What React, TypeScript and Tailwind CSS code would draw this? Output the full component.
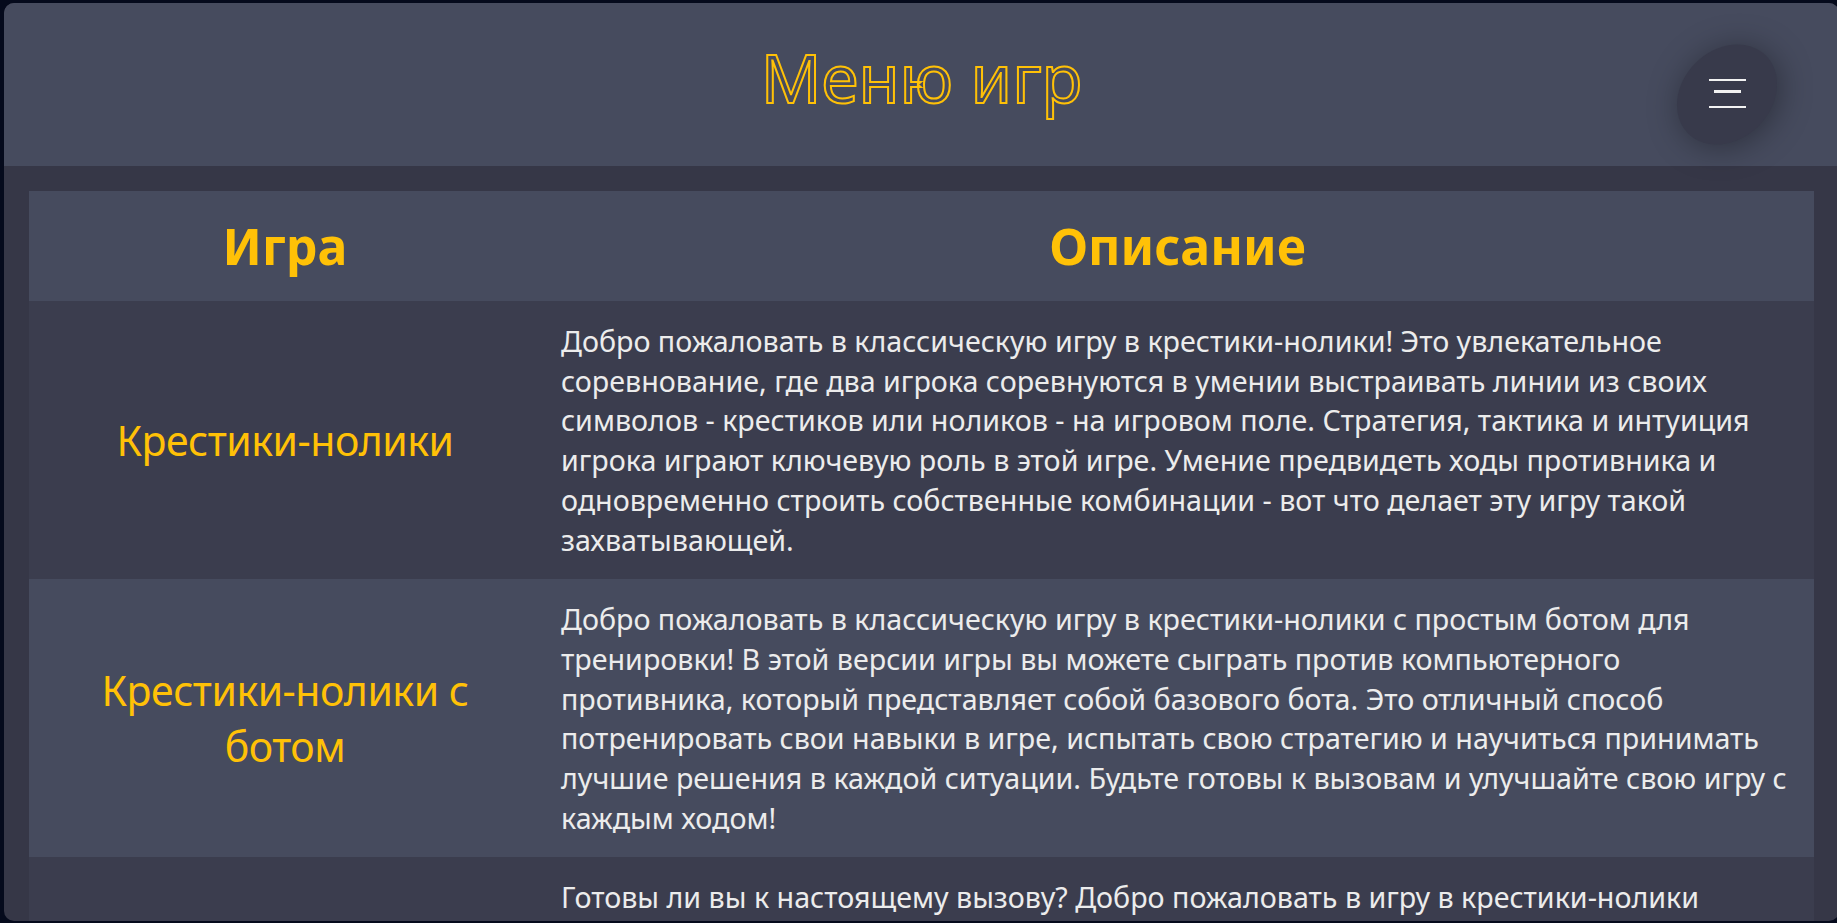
// Game menu page: header with outlined title + table of games
const games = [
  {
    name: "Крестики-нолики",
    lines: [
      "Добро пожаловать в классическую игру в крестики-нолики! Это увлекательное",
      "соревнование, где два игрока соревнуются в умении выстраивать линии из своих",
      "символов - крестиков или ноликов - на игровом поле. Стратегия, тактика и интуиция",
      "игрока играют ключевую роль в этой игре. Умение предвидеть ходы противника и",
      "одновременно строить собственные комбинации - вот что делает эту игру такой",
      "захватывающей.",
    ],
  },
  {
    name: "Крестики-нолики с ботом",
    lines: [
      "Добро пожаловать в классическую игру в крестики-нолики с простым ботом для",
      "тренировки! В этой версии игры вы можете сыграть против компьютерного",
      "противника, который представляет собой базового бота. Это отличный способ",
      "потренировать свои навыки в игре, испытать свою стратегию и научиться принимать",
      "лучшие решения в каждой ситуации. Будьте готовы к вызовам и улучшайте свою игру с",
      "каждым ходом!",
    ],
  },
  {
    name: "Крестики-нолики с умным ботом",
    lines: [
      "Готовы ли вы к настоящему вызову? Добро пожаловать в игру в крестики-нолики",
      "с умным ботом! Этот противник использует продуманную стратегию и не прощает",
      "ошибок. Каждый ваш ход будет тщательно проанализирован, а любая неточность",
      "может стоить вам победы. Сможете ли вы перехитрить компьютер и одержать верх?",
      "Проверьте свою внимательность и логику в самом сложном режиме игры и докажите,",
      "что вы настоящий мастер крестиков-ноликов!",
    ],
  },
];

function MenuButton() {
  return (
    <button className="absolute right-[62px] top-[41px] w-[100px] h-[100px] flex flex-col items-center justify-center">
      {/* tilted egg-shaped backdrop */}
      <span className="absolute left-[-5px] top-[5.5px] w-[110px] h-[89px] rounded-[50%] bg-[#383a4b] -rotate-45 shadow-[0_4px_32px_rgba(0,0,0,0.35)]" />
      <span className="relative flex flex-col items-center mt-[-1px]">
        <span className="block w-[37px] h-[2px] bg-[#f2f2f2]" />
        <span className="block w-[27px] h-[2.3px] bg-[#f2f2f2] mt-[9.5px]" />
        <span className="block w-[37px] h-[2px] bg-[#f2f2f2] mt-[13.5px]" />
      </span>
    </button>
  );
}

export default function App() {
  return (
    <div className="w-full h-screen overflow-hidden bg-[#050a1c] pl-[4px] pt-[3px] font-['Noto_Sans',sans-serif]">
      <div className="w-[1835px] h-[918px] rounded-[10px] overflow-hidden bg-[#363747] flex flex-col">
        {/* Header */}
        <header className="relative h-[163px] shrink-0 bg-[#464b5e] flex justify-center pt-[28px]">
          <h1 className="text-[67px] font-normal leading-[92px] text-transparent [-webkit-text-stroke:2px_#ffc107]">
            Меню игр
          </h1>
          <MenuButton />
        </header>

        {/* Games table */}
        <main className="px-[25px] pt-[25px]">
          <table className="w-[1785px] table-fixed border-collapse">
            <colgroup>
              <col className="w-[512px]" />
              <col className="w-[1273px]" />
            </colgroup>
            <thead>
              <tr className="bg-[#464b5e]">
                <th className="py-[21px] text-center text-[50px] font-bold leading-[68px] text-[#ffc107]">
                  Игра
                </th>
                <th className="py-[21px] text-center text-[50px] font-bold leading-[68px] text-[#ffc107]">
                  Описание
                </th>
              </tr>
            </thead>
            <tbody>
              {games.map((game, index) => (
                <tr
                  key={game.name}
                  className={index % 2 === 0 ? "bg-[#3b3d4e]" : "bg-[#464b5e]"}
                >
                  <td className="px-[20px] align-middle text-center text-[41px] leading-[56px] tracking-[-0.5px] text-[#ffc107]">
                    {game.name}
                  </td>
                  <td className="px-[20px] py-[20px] align-top text-left text-[28.65px] leading-[39.7px] text-[#ececec]">
                    {game.lines.map((line) => (
                      <span key={line} className="block whitespace-nowrap">
                        {line}
                      </span>
                    ))}
                  </td>
                </tr>
              ))}
            </tbody>
          </table>
        </main>
      </div>
    </div>
  );
}
